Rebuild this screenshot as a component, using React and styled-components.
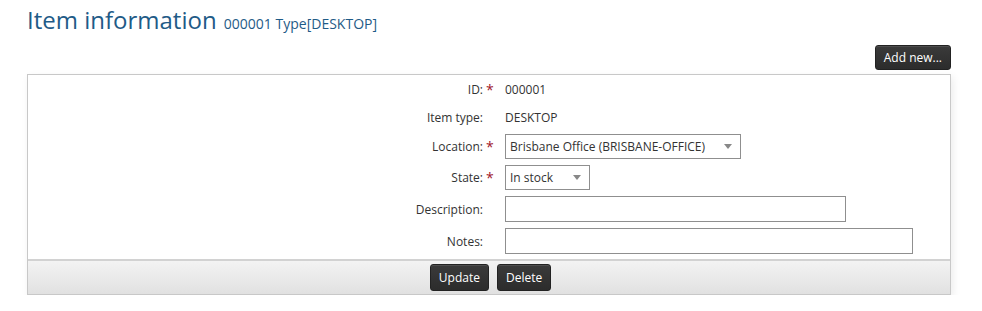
import React from "react"
import styled, { createGlobalStyle } from "styled-components"

const GlobalStyle = createGlobalStyle`
  body {
    margin: 0;
    background: #fff;
    font-family: "Open Sans", "Liberation Sans", sans-serif;
    color: #333;
  }
`

const Page = styled.div`
  padding: 3px 31px 0 27px;
`

const Title = styled.h1`
  margin: 0;
  font-size: 24px;
  font-weight: 400;
  color: #1f5b87;
  line-height: 34px;
  small {
    font-size: 14px;
    margin-left: 1px;
  }
`

const Actions = styled.div`
  display: flex;
  justify-content: flex-end;
  margin-top: 4px;
  margin-bottom: 4px;
`

const DarkButton = styled.button`
  font-family: "Open Sans", "Liberation Sans", sans-serif;
  font-size: 12px;
  color: #fff;
  background: linear-gradient(#3a3a3a, #2c2c2c);
  border: 1px solid #222;
  border-radius: 3px;
  height: ${(p) => p.h || 25}px;
  padding: 0 ${(p) => p.px || 8}px;
  cursor: pointer;
  box-shadow: inset 0 1px 0 rgba(255, 255, 255, 0.1);
`

const Panel = styled.div`
  border: 1px solid #c8c8c8;
  box-shadow: 2px 3px 8px rgba(0, 0, 0, 0.08);
  background: #fff;
`

const Form = styled.div`
  display: grid;
  grid-template-columns: 455px 22px 1fr;
  grid-auto-rows: auto;
  padding: 0 0 2px;
  font-size: 12px;
`

const Label = styled.div`
  text-align: right;
  display: flex;
  align-items: center;
  justify-content: flex-end;
  height: ${(p) => p.h}px;
`

const Star = styled.div`
  color: #a0152a;
  font-size: 14px;
  display: flex;
  align-items: center;
  height: ${(p) => p.h}px;
  padding-left: 3px;
`

const Value = styled.div`
  display: flex;
  align-items: center;
  height: ${(p) => p.h}px;
`

const SelectBox = styled.div`
  width: ${(p) => p.w}px;
  height: 25px;
  box-sizing: border-box;
  border: 1px solid #8f8f8f;
  display: flex;
  align-items: center;
  justify-content: space-between;
  padding: 0 8px 0 4px;
  font-size: 12px;
  background: #fff;
  &::after {
    content: "";
    border-left: 4px solid transparent;
    border-right: 4px solid transparent;
    border-top: 5px solid #888;
  }
`

const TextInput = styled.input`
  width: ${(p) => p.w}px;
  height: 26px;
  box-sizing: border-box;
  border: 1px solid #8f8f8f;
  padding: 0 4px;
  font-family: inherit;
`

const Footer = styled.div`
  border-top: 2px solid #d2d2d2;
  background: linear-gradient(#f3f3f3, #e1e1e1);
  display: flex;
  justify-content: center;
  gap: 8px;
  padding: 3px 0 3px 3px;
`

const rows = [
  { label: "ID:", req: true, h: 28, value: "000001" },
  { label: "Item type:", h: 28, value: "DESKTOP" },
  { label: "Location:", req: true, h: 31, select: "Brisbane Office (BRISBANE-OFFICE)", w: 236 },
  { label: "State:", req: true, h: 31, select: "In stock", w: 85 },
  { label: "Description:", h: 32, input: 341 },
  { label: "Notes:", h: 32, input: 408 },
]

export default function App() {
  return (
    <>
      <GlobalStyle />
      <Page>
        <Title>
          Item information <small>000001 Type[DESKTOP]</small>
        </Title>
        <Actions>
          <DarkButton h={25} px={8}>Add new...</DarkButton>
        </Actions>
        <Panel>
          <Form>
            {rows.map((r) => (
              <React.Fragment key={r.label}>
                <Label h={r.h}>{r.label}</Label>
                <Star h={r.h}>{r.req ? "*" : ""}</Star>
                <Value h={r.h}>
                  {r.value && r.value}
                  {r.select && <SelectBox w={r.w}>{r.select}</SelectBox>}
                  {r.input && <TextInput w={r.input} />}
                </Value>
              </React.Fragment>
            ))}
          </Form>
          <Footer>
            <DarkButton h={27} px={8}>Update</DarkButton>
            <DarkButton h={27} px={8}>Delete</DarkButton>
          </Footer>
        </Panel>
      </Page>
    </>
  )
}
